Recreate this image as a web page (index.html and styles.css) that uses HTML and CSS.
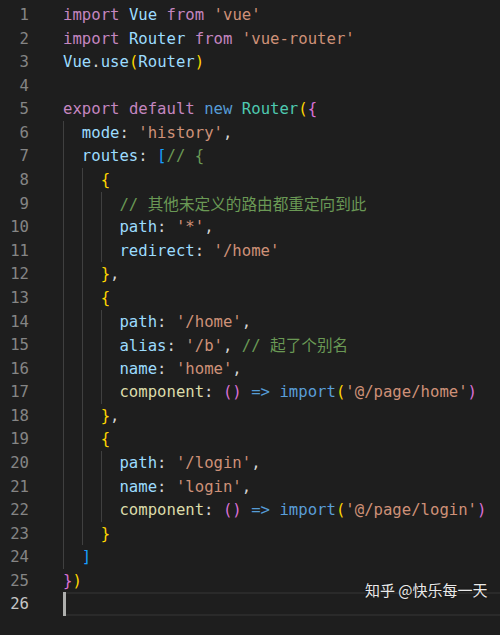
FILE: index.html
```html
<!DOCTYPE html>
<html lang="zh">
<head>
<meta charset="utf-8">
<title>router.js</title>
<link rel="stylesheet" href="styles.css">
</head>
<body>
<div class="editor">
  <div class="line"><span class="num">1</span><span class="code"><span class="kw">import</span> <span class="var">Vue</span> <span class="kw">from</span> <span class="str">'vue'</span></span></div>
  <div class="line"><span class="num">2</span><span class="code"><span class="kw">import</span> <span class="var">Router</span> <span class="kw">from</span> <span class="str">'vue-router'</span></span></div>
  <div class="line"><span class="num">3</span><span class="code"><span class="var">Vue</span>.<span class="var">use</span><span class="b1">(</span><span class="var">Router</span><span class="b1">)</span></span></div>
  <div class="line"><span class="num">4</span><span class="code"></span></div>
  <div class="line"><span class="num">5</span><span class="code"><span class="kw">export</span> <span class="kw">default</span> <span class="blue">new</span> <span class="cls">Router</span><span class="b1">(</span><span class="b2">{</span></span></div>
  <div class="line"><span class="num">6</span><span class="code"><span class="ind"></span><span class="var">mode</span>: <span class="str">'history'</span>,</span></div>
  <div class="line"><span class="num">7</span><span class="code"><span class="ind"></span><span class="var">routes</span>: <span class="b3">[</span><span class="cmt">// {</span></span></div>
  <div class="line"><span class="num">8</span><span class="code"><span class="ind"></span><span class="ind"></span><span class="b1">{</span></span></div>
  <div class="line"><span class="num">9</span><span class="code"><span class="ind"></span><span class="ind"></span><span class="ind"></span><span class="cmt">// <span class="cjk">其他未定义的路由都重定向到此</span></span></span></div>
  <div class="line"><span class="num">10</span><span class="code"><span class="ind"></span><span class="ind"></span><span class="ind"></span><span class="var">path</span>: <span class="str">'*'</span>,</span></div>
  <div class="line"><span class="num">11</span><span class="code"><span class="ind"></span><span class="ind"></span><span class="ind"></span><span class="var">redirect</span>: <span class="str">'/home'</span></span></div>
  <div class="line"><span class="num">12</span><span class="code"><span class="ind"></span><span class="ind"></span><span class="b1">}</span>,</span></div>
  <div class="line"><span class="num">13</span><span class="code"><span class="ind"></span><span class="ind"></span><span class="b1">{</span></span></div>
  <div class="line"><span class="num">14</span><span class="code"><span class="ind"></span><span class="ind"></span><span class="ind"></span><span class="var">path</span>: <span class="str">'/home'</span>,</span></div>
  <div class="line"><span class="num">15</span><span class="code"><span class="ind"></span><span class="ind"></span><span class="ind"></span><span class="var">alias</span>: <span class="str">'/b'</span>, <span class="cmt">// <span class="cjk">起了个别名</span></span></span></div>
  <div class="line"><span class="num">16</span><span class="code"><span class="ind"></span><span class="ind"></span><span class="ind"></span><span class="var">name</span>: <span class="str">'home'</span>,</span></div>
  <div class="line"><span class="num">17</span><span class="code"><span class="ind"></span><span class="ind"></span><span class="ind"></span><span class="fn">component</span>: <span class="b2">()</span> <span class="blue">=&gt;</span> <span class="imp">import</span><span class="b1">(</span><span class="str">'@/page/home'</span><span class="b2">)</span></span></div>
  <div class="line"><span class="num">18</span><span class="code"><span class="ind"></span><span class="ind"></span><span class="b1">}</span>,</span></div>
  <div class="line"><span class="num">19</span><span class="code"><span class="ind"></span><span class="ind"></span><span class="b1">{</span></span></div>
  <div class="line"><span class="num">20</span><span class="code"><span class="ind"></span><span class="ind"></span><span class="ind"></span><span class="var">path</span>: <span class="str">'/login'</span>,</span></div>
  <div class="line"><span class="num">21</span><span class="code"><span class="ind"></span><span class="ind"></span><span class="ind"></span><span class="var">name</span>: <span class="str">'login'</span>,</span></div>
  <div class="line"><span class="num">22</span><span class="code"><span class="ind"></span><span class="ind"></span><span class="ind"></span><span class="fn">component</span>: <span class="b2">()</span> <span class="blue">=&gt;</span> <span class="imp">import</span><span class="b1">(</span><span class="str">'@/page/login'</span><span class="b2">)</span></span></div>
  <div class="line"><span class="num">23</span><span class="code"><span class="ind"></span><span class="ind"></span><span class="b1">}</span></span></div>
  <div class="line"><span class="num">24</span><span class="code"><span class="ind"></span><span class="b3">]</span></span></div>
  <div class="line"><span class="num">25</span><span class="code"><span class="b2">}</span><span class="b1">)</span></span></div>
  <div class="line current"><span class="num">26</span><span class="code"><span class="cursor"></span></span></div>
</div>
<div class="watermark">知乎 @快乐每一天</div>
</body>
</html>
```
FILE: styles.css
```css
html, body {
  margin: 0;
  padding: 0;
  background: #1e1e1e;
}

body {
  width: 500px;
  height: 635px;
  overflow: hidden;
  position: relative;
}

.editor {
  padding-top: 3px;
  font-family: "DejaVu Sans Mono", "Noto Sans CJK SC", monospace;
  font-size: 15.63px;
  color: #d4d4d4;
}

.line {
  display: flex;
  height: 23.58px;
  line-height: 23.58px;
  white-space: pre;
}

.num {
  width: 29px;
  flex: none;
  text-align: right;
  color: #858585;
}

.code {
  display: block;
  margin-left: 34px;
  flex: 1;
  height: 23.58px;
}

.current .num {
  color: #c6c6c6;
}

.current .code {
  box-shadow: inset 0 2px 0 #2a2a2a, inset 0 -2px 0 #2a2a2a;
}

.ind {
  display: inline-block;
  vertical-align: top;
  width: 2ch;
  height: 23.58px;
  box-shadow: inset 1px 0 0 #404040;
}

.cursor {
  display: inline-block;
  vertical-align: top;
  width: 3px;
  height: 23.58px;
  background: #aeafad;
}

.kw { color: #c586c0; }
.var { color: #9cdcfe; }
.str { color: #ce9178; }
.blue { color: #569cd6; }
.cls { color: #4ec9b0; }
.fn { color: #dcdcaa; }
.imp { color: #5a9fd8; }
.cmt { color: #6a9955; }
.b1 { color: #ffd700; }
.b2 { color: #da70d6; }
.b3 { color: #179fff; }

.cjk {
  font-family: "Noto Sans CJK SC", sans-serif;
}

.watermark {
  position: absolute;
  left: 365px;
  top: 579px;
  font-family: "Noto Sans CJK SC", sans-serif;
  font-size: 15px;
  color: #eaeaea;
  text-shadow: 0 0 2px rgba(0, 0, 0, 0.6);
  white-space: nowrap;
}
```
